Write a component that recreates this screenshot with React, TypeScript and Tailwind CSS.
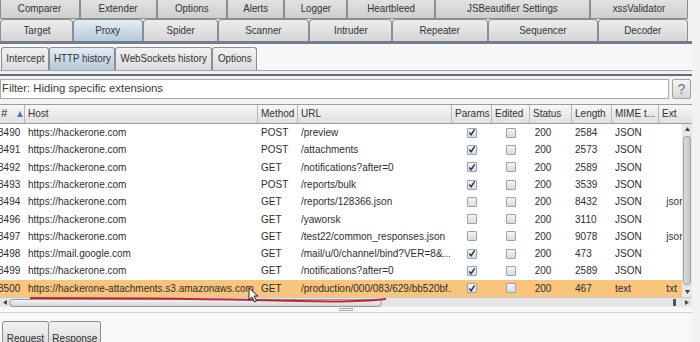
import React from "react";

type Row = {
  id: string;
  host: string;
  method: string;
  url: string;
  params: boolean;
  length: string;
  mime: string;
  ext: string;
  selected?: boolean;
};

const rows: Row[] = [
  { id: "3490", host: "https://hackerone.com", method: "POST", url: "/preview", params: true, length: "2584", mime: "JSON", ext: "" },
  { id: "3491", host: "https://hackerone.com", method: "POST", url: "/attachments", params: true, length: "2573", mime: "JSON", ext: "" },
  { id: "3492", host: "https://hackerone.com", method: "GET", url: "/notifications?after=0", params: true, length: "2589", mime: "JSON", ext: "" },
  { id: "3493", host: "https://hackerone.com", method: "POST", url: "/reports/bulk", params: true, length: "3539", mime: "JSON", ext: "" },
  { id: "3494", host: "https://hackerone.com", method: "GET", url: "/reports/128366.json", params: false, length: "8432", mime: "JSON", ext: "json" },
  { id: "3496", host: "https://hackerone.com", method: "GET", url: "/yaworsk", params: false, length: "3110", mime: "JSON", ext: "" },
  { id: "3497", host: "https://hackerone.com", method: "GET", url: "/test22/common_responses.json", params: false, length: "9078", mime: "JSON", ext: "json" },
  { id: "3498", host: "https://mail.google.com", method: "GET", url: "/mail/u/0/channel/bind?VER=8&...", params: true, length: "473", mime: "JSON", ext: "" },
  { id: "3499", host: "https://hackerone.com", method: "GET", url: "/notifications?after=0", params: true, length: "2589", mime: "JSON", ext: "" },
  { id: "3500", host: "https://hackerone-attachments.s3.amazonaws.com", method: "GET", url: "/production/000/083/629/bb520bf...", params: true, length: "467", mime: "text", ext: "txt", selected: true },
];

const topTabs = [
  { label: "Comparer", w: "w-[80px]" },
  { label: "Extender", w: "w-[77px]" },
  { label: "Options", w: "w-[70px]" },
  { label: "Alerts", w: "w-[57px]" },
  { label: "Logger", w: "w-[63px]" },
  { label: "Heartbleed", w: "w-[88px]" },
  { label: "JSBeautifier Settings", w: "w-[155px]" },
  { label: "xssValidator", w: "w-[98px]" },
];

const mainTabs = [
  { label: "Target", w: "w-[73px]" },
  { label: "Proxy", w: "w-[70px]", active: true },
  { label: "Spider", w: "w-[75px]" },
  { label: "Scanner", w: "w-[91px]" },
  { label: "Intruder", w: "w-[83px]" },
  { label: "Repeater", w: "w-[96px]" },
  { label: "Sequencer", w: "w-[110px]" },
  { label: "Decoder", w: "w-[90px]" },
];

const subTabs = [
  { label: "Intercept", w: "w-[48px]" },
  { label: "HTTP history", w: "w-[66px]", active: true },
  { label: "WebSockets history", w: "w-[97px]" },
  { label: "Options", w: "w-[45px]" },
];

// the video capture is squeezed sideways, so text is narrowed a bit
const Narrow = ({ children }: { children: React.ReactNode }) => (
  <span className="inline-block origin-left scale-x-[0.87]">{children}</span>
);

const Check = ({ checked }: { checked: boolean }) => (
  <div className="w-[10px] h-[10px] border border-[#9aa3ad] rounded-[1px] bg-gradient-to-b from-[#f4f4f4] to-[#d8dce0] flex items-center justify-center">
    {checked && (
      <svg width="9" height="9" viewBox="0 0 9 9">
        <path d="M1.5 4.5 L3.5 7 L7.5 1" stroke="#243650" strokeWidth="1.6" fill="none" />
      </svg>
    )}
  </div>
);

const Cell = ({ w, children, center }: { w: string; children?: React.ReactNode; center?: boolean }) => (
  <div className={`${w} shrink-0 overflow-hidden whitespace-nowrap flex items-center ${center ? "justify-center" : "pl-[3px]"}`}>
    {center ? children : <Narrow>{children}</Narrow>}
  </div>
);

const App: React.FC = () => {
  return (
    <div
      className="relative w-[700px] h-[342px] overflow-hidden bg-[#f2f2f2] text-[11px] text-[#2e2e2e] whitespace-nowrap"
      style={{ fontFamily: '"Liberation Sans", Arial, sans-serif' }}
    >
      {/* top tab rows */}
      <div className="flex h-[19px] bg-[#f2f2f2]">
        {topTabs.map((t) => (
          <div
            key={t.label}
            className={`${t.w} shrink-0 h-full border-l border-r border-b border-[#8d8d8d] bg-gradient-to-b from-[#e2e2e2] to-[#cfcfcf] flex items-center justify-center text-[11.5px] text-[#333]`}
          >
            <span className="inline-block scale-x-[0.85]">{t.label}</span>
          </div>
        ))}
      </div>
      <div className="flex h-[22px]">
        {mainTabs.map((t) => (
          <div
            key={t.label}
            className={`${t.w} shrink-0 h-full border-l border-r border-t border-[#8d8d8d] rounded-t-[4px] flex items-center justify-center text-[11.5px] text-[#333] ${
              t.active ? "bg-gradient-to-b from-[#e4edf5] to-[#b6cadb]" : "bg-gradient-to-b from-[#ececec] to-[#d6d6d6]"
            }`}
          >
            <span className="inline-block scale-x-[0.85]">{t.label}</span>
          </div>
        ))}
      </div>
      <div className="h-[3px] bg-[#6f7f8d] w-[692px]" />

      {/* sub tabs */}
      <div className="h-[27px] bg-[#f7f7f7] pt-[3px] border-b border-[#a6a6a6] w-[692px]">
        <div className="flex h-[23px] pl-[1px]">
          {subTabs.map((t) => (
            <div
              key={t.label}
              className={`${t.w} shrink-0 h-full border-l border-r border-t border-[#8d8d8d] rounded-t-[3px] flex items-center justify-center text-[11.5px] text-[#333] ${
                t.active ? "bg-gradient-to-b from-[#e4edf5] to-[#b3c7d8]" : "bg-gradient-to-b from-[#f2f2f2] to-[#dcdcdc]"
              }`}
            >
              <span className="inline-block scale-x-[0.85]">{t.label}</span>
            </div>
          ))}
        </div>
      </div>
      <div className="h-[3px] bg-[#eeeeee] w-[692px]" />
      <div className="h-[2px] bg-[#5f6f7d] w-[692px]" />

      {/* filter bar */}
      <div className="flex items-center h-[24px] pt-[2px] w-[692px]">
        <div className="w-[669px] h-[20px] bg-white border border-[#a9a9a9] flex items-center pl-[1px] text-[11.5px] text-[#3a3a3a]">
          <span className="inline-block origin-left scale-x-[0.98]">Filter: Hiding specific extensions</span>
        </div>
        <div className="ml-[3px] w-[19px] h-[20px] border border-[#a0a0a0] rounded-[2px] bg-gradient-to-b from-[#f6f6f6] to-[#d6d6d6] flex items-center justify-center text-[14px] text-[#777]">
          ?
        </div>
      </div>

      {/* table */}
      <div className="mt-[4px] w-[692px]">
        <div className="flex h-[20px] border-t border-b border-[#9c9c9c] bg-gradient-to-b from-[#f7f7f7] to-[#e0e0e0] text-[11.5px] text-[#333]">
          <div className="w-[25px] shrink-0 flex items-center border-r border-[#b8b8b8]">
            <span className="ml-[1px]">#</span>
            <svg className="ml-[10px]" width="6" height="6" viewBox="0 0 6 6">
              <path d="M0 6 L3 0 L6 6 Z" fill="#5b7a99" />
            </svg>
          </div>
          {[
            ["Host", "w-[233px]"],
            ["Method", "w-[40px]"],
            ["URL", "w-[154px]"],
            ["Params", "w-[40px]"],
            ["Edited", "w-[38px]"],
            ["Status", "w-[42px]"],
            ["Length", "w-[40px]"],
            ["MIME t...", "w-[47px]"],
            ["Ext", "w-[33px]"],
          ].map(([label, w], i) => (
            <div key={label} className={`${w} shrink-0 flex items-center overflow-hidden pl-[3px] ${i < 8 ? "border-r border-[#b8b8b8]" : ""}`}>
              <Narrow>{label}</Narrow>
            </div>
          ))}
        </div>

        <div className="flex">
          <div className="w-[682px] bg-white text-[11.5px]">
            {rows.map((r) => (
              <div key={r.id} className={`flex h-[17.3px] ${r.selected ? "bg-[#f9c57c]" : ""}`}>
                <div className="w-[25px] shrink-0 flex items-center overflow-hidden">
                  <span className="ml-[-2px] inline-block origin-left scale-x-[0.87]">{r.id}</span>
                </div>
                <Cell w="w-[233px]">{r.host}</Cell>
                <Cell w="w-[40px]">{r.method}</Cell>
                <Cell w="w-[154px]">{r.url}</Cell>
                <Cell w="w-[40px]" center>
                  <Check checked={r.params} />
                </Cell>
                <Cell w="w-[38px]" center>
                  <Check checked={false} />
                </Cell>
                <Cell w="w-[42px]">
                  <span className="pl-[2px]">200</span>
                </Cell>
                <Cell w="w-[40px]">{r.length}</Cell>
                <Cell w="w-[47px]">{r.mime}</Cell>
                <Cell w="w-[23px]">
                  <span className="pl-[5px]">{r.ext}</span>
                </Cell>
              </div>
            ))}
          </div>
          {/* vertical scrollbar */}
          <div className="w-[10px] h-[173px] bg-[#e8e8e8] flex flex-col items-center">
            <div className="h-[10px] flex items-center justify-center">
              <svg width="5" height="4" viewBox="0 0 5 4">
                <path d="M0 4 L2.5 0 L5 4 Z" fill="#444" />
              </svg>
            </div>
            <div className="w-[8px] flex-1 my-[2px] rounded-[3px] border border-[#a2a2a2] bg-gradient-to-r from-[#dedede] to-[#c2c2c2]" />
            <div className="h-[10px] flex items-center justify-center">
              <svg width="5" height="4" viewBox="0 0 5 4">
                <path d="M0 0 L2.5 4 L5 0 Z" fill="#444" />
              </svg>
            </div>
          </div>
        </div>

        {/* horizontal scrollbar */}
        <div className="flex items-center h-[10px] bg-[#e6e6e6] border-t border-[#c8c8c8]">
          <div className="w-[9px] flex items-center justify-center">
            <svg width="4" height="5" viewBox="0 0 4 5">
              <path d="M4 0 L0 2.5 L4 5 Z" fill="#444" />
            </svg>
          </div>
          <div className="w-[373px] h-[8px] rounded-[4px] border border-[#8e9aa5] bg-gradient-to-b from-[#f4f4f4] to-[#cfd5da]" />
          <div className="flex-1" />
          <div className="w-[3px] h-[7px] bg-[#555] mr-[6px]" />
          <div className="w-[10px] flex items-center justify-center">
            <svg width="4" height="5" viewBox="0 0 4 5">
              <path d="M0 0 L4 2.5 L0 5 Z" fill="#444" />
            </svg>
          </div>
        </div>
      </div>

      {/* split divider + lower tabs */}
      <div className="bg-[#f8f8f8] w-[692px] h-[40px]">
        <div className="h-[6px] border-b border-[#d2d2d2] flex justify-center items-end">
          <div className="w-[14px] h-[3px] border-t border-b border-[#a8a8a8] mb-[1px]" />
        </div>
        <div className="flex pt-[8px] pl-[2px]">
          <div className="w-[47px] h-[24px] border border-[#8d8d8d] rounded-t-[3px] bg-gradient-to-b from-[#f2f2f2] to-[#dcdcdc] flex justify-center pt-[8px] text-[11.5px]">
            <span className="inline-block scale-x-[0.87]">Request</span>
          </div>
          <div className="w-[52px] h-[24px] border border-l-0 border-[#8d8d8d] rounded-t-[3px] bg-gradient-to-b from-[#f2f2f2] to-[#dcdcdc] flex justify-center pt-[8px] text-[11.5px]">
            <span className="inline-block scale-x-[0.87]">Response</span>
          </div>
        </div>
      </div>

      {/* red pen annotation */}
      <svg className="absolute left-0 top-0 pointer-events-none" width="700" height="342">
        <path d="M30 298 C 120 298, 220 299, 300 301 C 340 302, 370 301, 386 299" stroke="#c4262a" strokeWidth="2" fill="none" />
      </svg>

      {/* mouse cursor */}
      <svg className="absolute left-[248px] top-[287px] pointer-events-none" width="12" height="17" viewBox="0 0 12 17">
        <path d="M1 1 L1 13 L4 10 L6.5 15 L8.5 14 L6 9 L10 9 Z" fill="#fff" stroke="#222" strokeWidth="1" />
      </svg>
    </div>
  );
};

export default App;
